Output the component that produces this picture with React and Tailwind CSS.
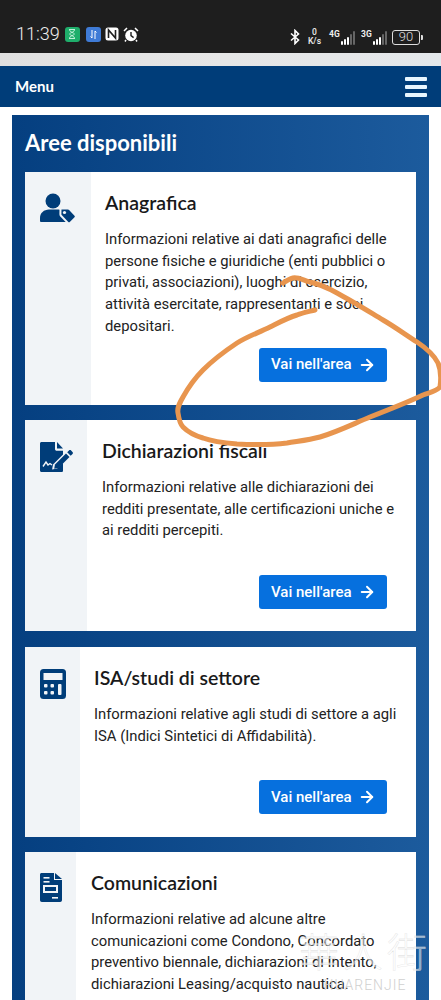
import { ArrowRight } from 'lucide-react'

const cards = [
  {
    title: 'Anagrafica',
    text: 'Informazioni relative ai dati anagrafici delle persone fisiche e giuridiche (enti pubblici o privati, associazioni), luoghi di esercizio, attività esercitate, rappresentanti e soci depositari.',
    icon: <IconUserTag />,
    side: 'w-[66px]',
    box: 'mb-[15px] h-[233px]',
    gap: 'h-[10px]',
    inset: 'pl-[14px]',
  },
  {
    title: 'Dichiarazioni fiscali',
    text: 'Informazioni relative alle dichiarazioni dei redditi presentate, alle certificazioni uniche e ai redditi percepiti.',
    icon: <IconFileSign />,
    side: 'w-[62px]',
    box: 'mb-[16px] h-[211px]',
    gap: 'h-[33px]',
    inset: 'pl-[15px]',
  },
  {
    title: 'ISA/studi di settore',
    text: 'Informazioni relative agli studi di settore a agli ISA (Indici Sintetici di Affidabilità).',
    icon: <IconCalculator />,
    side: 'w-[55px]',
    box: 'mb-[15px] h-[190px]',
    gap: 'h-[33px]',
    inset: 'pl-[14px]',
  },
  {
    title: 'Comunicazioni',
    text: 'Informazioni relative ad alcune altre comunicazioni come Condono, Concordato preventivo biennale, dichiarazioni di Intento, dichiarazioni Leasing/acquisto nautica.',
    icon: <IconFileInvoice />,
    side: 'w-[51px]',
    box: 'h-[233px]',
    gap: 'h-[10px]',
    inset: 'pl-[15px]',
  },
]

export default function App() {
  return (
    <div className="relative h-[1000px] w-[441px] overflow-hidden bg-white font-['Roboto',sans-serif]">
      <StatusBar />
      <div className="h-[13px] bg-gradient-to-r from-[#e0e0e0] via-[#e6e6e6] to-[#e4e8eb]" />
      <div className="flex h-[41px] items-center justify-between bg-[#003d79] pl-[15px] pr-[14px]">
        <span className="font-['Lato',sans-serif] text-[15px] font-bold text-white">Menu</span>
        <div className="flex w-[22px] flex-col gap-[4px]">
          <span className="h-[4px] rounded-[1px] bg-[#e8f6ff]" />
          <span className="h-[4px] rounded-[1px] bg-[#e8f6ff]" />
          <span className="h-[4px] rounded-[1px] bg-[#e8f6ff]" />
        </div>
      </div>

      <div className="mx-[12px] mt-[8px] h-[900px] bg-gradient-to-r from-[#053f80] to-[#1c5b9d] px-[13px]">
        <h1 className="flex h-[57px] items-center pb-[2px] font-['Lato',sans-serif] text-[22px] font-bold text-white">
          Aree disponibili
        </h1>
        {cards.map((card) => (
          <Card key={card.title} {...card} />
        ))}
      </div>

      <Scribble />
      <Watermark />
    </div>
  )
}

function Card({ title, text, icon, side, box, gap, inset }) {
  return (
    <div className={`flex overflow-hidden bg-white ${box}`}>
      <div className={`flex shrink-0 justify-center bg-[#f1f4f7] pt-[20px] ${side}`}>{icon}</div>
      <div className={`flex-1 pr-[17px] pt-[18px] ${inset}`}>
        <h2 className="font-['Lato',sans-serif] text-[19.5px] font-semibold leading-[26px] text-[#19191a]">{title}</h2>
        <p className="mt-[13px] text-[14.8px] leading-[21.7px] text-[#222]">{text}</p>
        <div className={gap} />
        <div className="flex justify-end pr-[12px]">
          <button className="flex h-[34px] w-[128px] items-center gap-[6px] rounded-[3px] bg-[#0670de] pl-[12px] text-[15px] font-medium text-white">
            <span>Vai nell'area</span>
            <ArrowRight size={18} strokeWidth={2.6} />
          </button>
        </div>
      </div>
    </div>
  )
}

function StatusBar() {
  return (
    <div className="flex h-[53px] items-end justify-between bg-[#1e1e1e] pb-[7px] pl-[16px] pr-[18px] text-white">
      <div className="flex items-center gap-[5px]">
        <span className="text-[18px] font-light leading-[24px] text-[#eee]">11:39</span>
        <span className="flex h-[15px] w-[15px] items-center justify-center rounded-[3px] bg-[#1fae6b]">
          <svg width="8" height="10" viewBox="0 0 8 10" fill="none" stroke="#bff0d8" strokeWidth="1"><path d="M1 .5h6M1 9.500h6M1.500 1c0 2 5 3 5 4s-5 2-5 4M6.500 1c0 2-5 3-5 4s5 2 5 4" /></svg>
        </span>
        <span className="ml-[1px] flex h-[15px] w-[15px] items-center justify-center rounded-[3px] bg-[#3f7bd6]">
          <svg width="9" height="9" viewBox="0 0 9 9" fill="none" stroke="#fff" strokeWidth="1"><path d="M3 0v8M1.500 6.500 3 8M6 9V1M6 1l1.500 1.500" /></svg>
        </span>
        <svg width="14" height="14" viewBox="0 0 14 14" className="-ml-[1px]"><rect x="0.500" y="0.500" width="13" height="13" rx="2.500" fill="#fff" /><path d="M3.500 11V3l7 8V3" fill="none" stroke="#1e1e1e" strokeWidth="1.600" /></svg>
        <svg width="16" height="15" viewBox="0 0 16 15" className="-ml-[1px]"><circle cx="8" cy="8.500" r="5.800" fill="#fff" /><path d="M8 5v3.600l2.600 2" fill="none" stroke="#1e1e1e" strokeWidth="1.400" /><path d="M1 4 4 1M15 4l-3-3M3 13l-1 1.500M13 13l1 1.500" stroke="#fff" strokeWidth="1.500" /></svg>
      </div>
      <div className="flex items-center">
        <svg width="12" height="16" viewBox="0 0 12 16" fill="none" stroke="#fff" strokeWidth="1.600"><path d="M2 4.500 9.500 11 6 14.500V1.500L9.500 5 2 11.500" /></svg>
        <div className="ml-[5px] flex w-[17px] flex-col items-center text-[8.500px] font-medium leading-[9px] text-[#eee]">
          <span>0</span>
          <span>K/s</span>
        </div>
        <Signal label="4G" bars={3} className="ml-[6px]" />
        <Signal label="3G" bars={3} className="ml-[6px]" />
        <div className="ml-[5px] flex h-[15px] w-[28px] items-center justify-center rounded-[3px] border border-[#ddd] text-[13px] font-light text-[#ddd]">90</div>
        <span className="ml-[1px] h-[5px] w-[2px] rounded-r-[1px] bg-[#ddd]" />
      </div>
    </div>
  )
}

function Signal({ label, bars, className }) {
  const heights = [4, 6, 8, 11, 14]
  return (
    <div className={`relative flex h-[15px] w-[26px] items-end justify-end gap-[1px] ${className}`}>
      <span className="absolute left-0 top-0 text-[8.500px] font-bold leading-[9px] text-[#eee]">{label}</span>
      {heights.map((h, i) => (
        <span
          key={i}
          className={i < bars ? 'w-[2px] rounded-[1px] bg-white' : 'w-[2px] rounded-[1px] bg-[#666]'}
          style={{ height: h }}
        />
      ))}
    </div>
  )
}

function IconUserTag() {
  return (
    <svg width="36" height="31" viewBox="0 0 36 31" fill="#003d79" className="mt-[1px]">
      <circle cx="13" cy="8" r="7.500" />
      <path d="M0 28v-3c0-5 4-8.500 9-8.500h8c4 0 7 2 8 5l4 7.500H2.500C1 29 0 29 0 28Z" />
      <path d="M20.500 15.500h7.500c.7 0 1.300.3 1.800.8l5.400 5.700c.9.900.9 2 0 2.900l-4.700 4.700c-.9.900-2 .9-2.900 0l-6.600-6.800c-.4-.4-.6-1-.6-1.600Z" stroke="#f1f4f7" strokeWidth="2" fillRule="evenodd" />
      <circle cx="24.500" cy="19.500" r="1.600" fill="#f1f4f7" />
    </svg>
  )
}

function IconFileSign() {
  return (
    <svg width="33" height="30" viewBox="0 0 33 30" fill="#003d79" className="mt-[2px]">
      <path d="M0 1.500C0 .7.700 0 1.500 0H15v7c0 1 .8 1.800 1.800 1.800H23v3.700l-9 9-1 .9-.9 5 5.100-.9 5.800-5.800v8c0 .7-.6 1.300-1.300 1.300H1.500C.7 30 0 29.300 0 28.500Z" />
      <path d="M17 0 23 6.500h-6Z" />
      <path d="M3 24.500 6 20l2 3 2-1.500 2 1.500" fill="none" stroke="#f1f4f7" strokeWidth="1.400" />
      <path d="M15 22.500 26 11.500l3.500 3.500L18.500 26l-4.300.8Z" />
      <path d="M27.200 10.300 29 8.500c.6-.6 1.500-.6 2.100 0l1.400 1.400c.6.600.6 1.500 0 2.100l-1.800 1.800Z" />
    </svg>
  )
}

function IconCalculator() {
  return (
    <svg width="26" height="30" viewBox="0 0 26 30" className="mt-[2px]">
      <rect width="26" height="30" rx="3.500" fill="#003d79" />
      <rect x="3.500" y="4" width="19" height="7" fill="#f1f4f7" />
      <g fill="#f1f4f7">
        <rect x="4" y="15" width="3.500" height="3.500" rx="1" />
        <rect x="10.500" y="15" width="3.500" height="3.500" rx="1" />
        <rect x="18" y="15" width="3.500" height="11" rx="1" />
        <rect x="4" y="22" width="3.500" height="3.500" rx="1" />
        <rect x="10.500" y="22" width="3.500" height="3.500" rx="1" />
      </g>
    </svg>
  )
}

function IconFileInvoice() {
  return (
    <svg width="22" height="29" viewBox="0 0 22 29" className="mt-[1px]">
      <path d="M0 1.500C0 .7.700 0 1.500 0H14v7h8v20c0 1-.8 2-1.800 2H1.800C.8 29 0 28 0 27Z" fill="#003d79" />
      <path d="M15 0 22 6h-7Z" fill="#003d79" />
      <g fill="#f1f4f7">
        <rect x="3.500" y="4" width="6" height="1.600" />
        <rect x="3.500" y="8" width="6" height="1.600" />
        <rect x="12" y="24" width="6" height="1.600" />
        <path fillRule="evenodd" d="M3 12h15v8H3Zm2 2v4h11v-4Z" />
      </g>
    </svg>
  )
}

function Scribble() {
  return (
    <svg width="441" height="1000" viewBox="0 0 441 1000" fill="none" className="pointer-events-none absolute left-0 top-0">
      <path
        d="M315 310C307 312 302 313 297 315C287 318 278 323 270 327C258 333 248 336 237 343C225 351 213 360 203 370C195 378 188 388 183 397C179 404 177 408 178 413C179 420 180 424 183 427C189 433 196 436 203 438C214 442 225 443 237 444C255 445 271 445 287 443C299 441 309 440 320 437C337 432 353 424 370 417C388 410 406 403 423 395C431 392 437 391 440 387C441 380 441 370 438 363C434 355 426 348 417 342C406 335 395 327 383 320C368 311 352 301 337 293C328 288 319 284 310 282C303 280 298 277 293 278C289 279 286 281 283 283"
        stroke="#e8954e"
        strokeWidth="5"
        strokeLinecap="round"
        strokeLinejoin="round"
      />
    </svg>
  )
}

function Watermark() {
  return (
    <div className="pointer-events-none absolute bottom-[8px] right-[10px] flex flex-col items-center">
      <span className="font-['Noto_Sans_CJK_SC',sans-serif] text-[40px] font-light leading-[44px] tracking-[4px] [-webkit-text-stroke:0.3px_#dadada] [color:rgba(255,255,255,0.5)]">華人街</span>
      <span className="mt-[6px] text-[14px] font-light leading-[14px] tracking-[1px] text-[#d0d0d0]">HUARENJIE</span>
    </div>
  )
}
